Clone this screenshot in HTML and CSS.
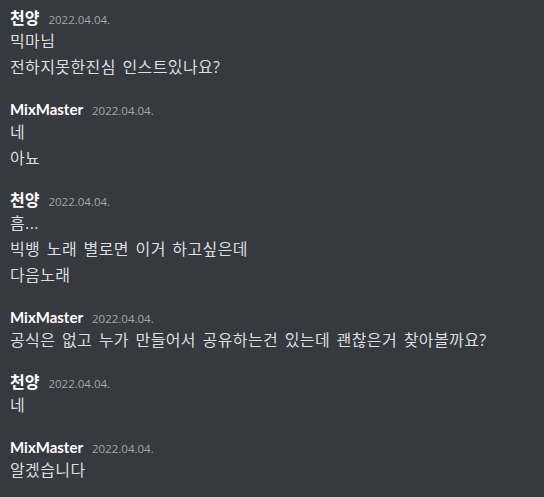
FILE: index.html
```html
<!DOCTYPE html>
<html lang="ko">
<head>
<meta charset="utf-8">
<link rel="stylesheet" href="styles.css">
</head>
<body>
<div class="chat">
  <div class="group">
    <div class="header"><span class="name name-ko">천양</span><span class="time">2022.04.04.</span></div>
    <div class="msg">믹마님</div>
    <div class="msg">전하지못한진심 인스트있나요?</div>
  </div>
  <div class="group">
    <div class="header"><span class="name">MixMaster</span><span class="time">2022.04.04.</span></div>
    <div class="msg">네</div>
    <div class="msg">아뇨</div>
  </div>
  <div class="group">
    <div class="header"><span class="name name-ko">천양</span><span class="time">2022.04.04.</span></div>
    <div class="msg">흠...</div>
    <div class="msg">빅뱅 노래 별로면 이거 하고싶은데</div>
    <div class="msg">다음노래</div>
  </div>
  <div class="group">
    <div class="header"><span class="name">MixMaster</span><span class="time">2022.04.04.</span></div>
    <div class="msg">공식은 없고 누가 만들어서 공유하는건 있는데 괜찮은거 찾아볼까요?</div>
  </div>
  <div class="group">
    <div class="header"><span class="name name-ko">천양</span><span class="time">2022.04.04.</span></div>
    <div class="msg">네</div>
  </div>
  <div class="group">
    <div class="header"><span class="name">MixMaster</span><span class="time">2022.04.04.</span></div>
    <div class="msg">알겠습니다</div>
  </div>
</div>
</body>
</html>
```
FILE: styles.css
```css
html, body {
  margin: 0;
  padding: 0;
  background: #36393f;
}
body {
  font-family: "Open Sans", "Noto Sans CJK KR", sans-serif;
  color: #dcddde;
}
.chat {
  display: flex;
  flex-direction: column;
  gap: 19px;
  padding: 8px 10px;
}
.header {
  display: flex;
  align-items: baseline;
  gap: 9px;
  height: 20px;
  line-height: 20px;
}
.name {
  font-family: "Lato", "Noto Sans CJK KR", sans-serif;
  font-size: 15px;
  font-weight: 700;
  color: #ffffff;
}
.name-ko {
  font-size: 16px;
}
.time {
  font-size: 11.5px;
  color: #a3a6aa;
}
.msg {
  font-size: 16px;
  letter-spacing: 0.4px;
  word-spacing: 2px;
  line-height: 26px;
  color: #dcddde;
}
```
